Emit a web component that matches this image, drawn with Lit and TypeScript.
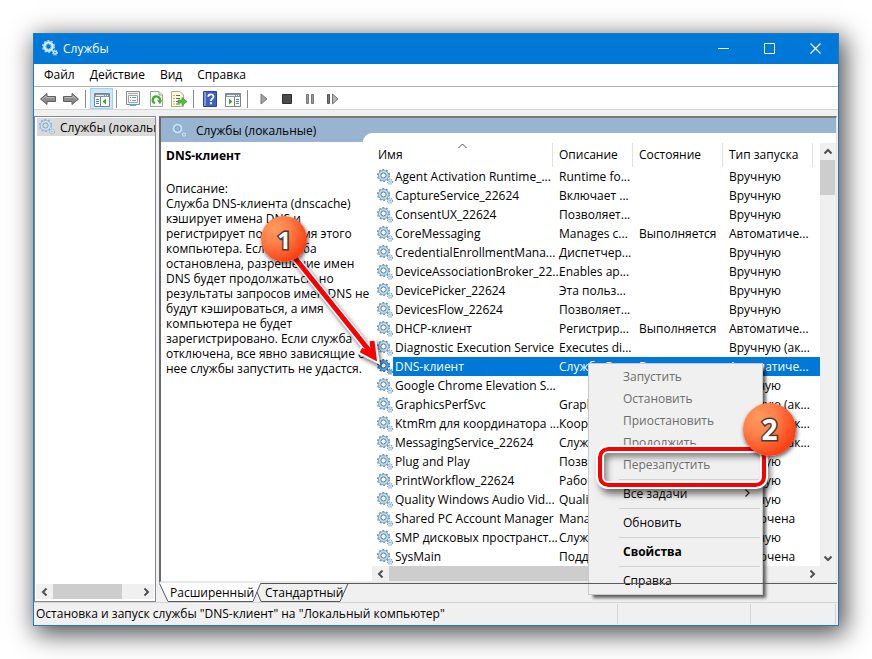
import { LitElement, html, svg, css, nothing } from "lit";
import { customElement, state } from "lit/decorators.js";
import { classMap } from "lit/directives/class-map.js";

interface Service {
  name: string;
  description: string;
  status: string;
  startup: string;
}

const row = (name: string, description: string, startup: string, status = ""): Service => ({
  name,
  description,
  status,
  startup,
});

const SERVICES: Service[] = [
  row("Agent Activation Runtime_...", "Runtime fo...", "Вручную"),
  row("CaptureService_22624", "Включает ...", "Вручную"),
  row("ConsentUX_22624", "Позволяет...", "Вручную"),
  row("CoreMessaging", "Manages c...", "Автоматиче...", "Выполняется"),
  row("CredentialEnrollmentMana...", "Диспетчер...", "Вручную"),
  row("DeviceAssociationBroker_22...", "Enables ap...", "Вручную"),
  row("DevicePicker_22624", "Эта польз...", "Вручную"),
  row("DevicesFlow_22624", "Позволяет...", "Вручную"),
  row("DHCP-клиент", "Регистрир...", "Автоматиче...", "Выполняется"),
  row("Diagnostic Execution Service", "Executes di...", "Вручную (ак..."),
  row("DNS-клиент", "Служба D...", "Автоматиче...", "Выполняется"),
  row("Google Chrome Elevation S...", "", "Вручную"),
  row("GraphicsPerfSvc", "Graphics p...", "Вручную (ак..."),
  row("KtmRm для координатора ...", "Координи...", "Вручную (ак..."),
  row("MessagingService_22624", "Служба, о...", "Вручную (ак..."),
  row("Plug and Play", "Позволяет...", "Вручную"),
  row("PrintWorkflow_22624", "Рабочий п...", "Вручную"),
  row("Quality Windows Audio Vid...", "Quality Wi...", "Вручную"),
  row("Shared PC Account Manager", "Manages p...", "Отключена"),
  row("SMP дисковых пространст...", "Служба уз...", "Вручную"),
  row("SysMain", "Поддержи...", "Отключена"),
];

const DESCRIPTION = [
  "Служба DNS-клиента (dnscache)",
  "кэширует имена DNS и",
  "регистрирует полное имя этого",
  "компьютера. Если служба",
  "остановлена, разрешение имен",
  "DNS будет продолжаться, но",
  "результаты запросов имен DNS не",
  "будут кэшироваться, а имя",
  "компьютера не будет",
  "зарегистрировано. Если служба",
  "отключена, все явно зависящие от",
  "нее службы запустить не удастся.",
];

const gears = (kind: "normal" | "pale" | "title" | "selected" = "normal") => {
  const c = {
    normal: ["#6f96b5", "#bcdcf0", "#4f7a9e", "#6c95b6"],
    pale: ["#8db2cf", "#c9e4f5", "#7ba3c3", "#8fb4d0"],
    title: ["#a8d4f2", "#d9effb", "#86bce4", "#b5daf3"],
    selected: ["#1f6fb4", "#5ea4dc", "#14589a", "#2474ba"],
  }[kind];
  return html`<svg class="gear" viewBox="0 0 16 16" width="16" height="16" aria-hidden="true">
    <circle cx="6.5" cy="6.5" r="5.7" fill="none" stroke=${c[0]} stroke-width="1.8" stroke-dasharray="1.9 1.68" />
    <circle cx="6.5" cy="6.5" r="4" fill="none" stroke=${c[1]} stroke-width="2.6" />
    <circle cx="6.5" cy="6.5" r="5.1" fill="none" stroke=${c[0]} stroke-width=".7" />
    <circle cx="6.5" cy="6.5" r="2.6" fill="none" stroke=${c[2]} stroke-width="1" />
    <circle cx="13" cy="12.6" r="2.4" fill="none" stroke=${c[3]} stroke-width="1.3" stroke-dasharray="1.1 .78" />
    <circle cx="13" cy="12.6" r="1.5" fill="none" stroke=${c[1]} stroke-width="1.1" />
    <circle cx="13" cy="12.6" r=".6" fill=${c[2]} />
  </svg>`;
};

const glyphs = {
  back: svg`<path d="M.5 8 7 2.500V5.500H15.500V10.500H7V13.500Z" fill="#8c8c8c" stroke="#5f5f5f"/><path d="M2.500 8 6.200 5V6.600H14.500" fill="none" stroke="#bdbdbd"/>`,
  forward: svg`<path d="M15.500 8 9 2.500V5.500H.5V10.500H9V13.500Z" fill="#8c8c8c" stroke="#5f5f5f"/><path d="M1.500 6.600H9.800V5L13.500 8" fill="none" stroke="#bdbdbd"/>`,
  tree: svg`<path d="M.5 2.500H15.500V15.500H.5Z" fill="#fff" stroke="#7d8489"/><path d="M1 3H15V6H1Z" fill="#8b949a"/><path d="M2 4.500H10M11 4.500H12M13 4.500H14" stroke="#e8eef2"/><path d="M6.500 6V15" stroke="#7d8489"/><path d="M2 8.500H5M2 10.500H5M2 12.500H5" stroke="#3e86c4"/><path d="M12 7.500V13.500L8.500 10.500Z" fill="#2fae2c"/>`,
  props: svg`<path d="M1.500.5H14.500V13.500H1.500Z" fill="#f4f4f4" stroke="#8a8a8a"/><path d="M3 2.500H13" stroke="#a9a9a9"/><path d="M3.500 4.500H12.500V11.500H3.500Z" fill="#fff" stroke="#9aa4ab"/><path d="M5 6.500H6M7 6.500H11M5 9.500H6M7 9.500H11" stroke="#6d93b3"/><path d="M5 13H11V15H5Z" fill="#58a7d8"/>`,
  refresh: svg`<path d="M2.500.5H11L14.500 4V15.500H2.500Z" fill="#fbfbf6" stroke="#a3a39c"/><path d="M11 .5V4H14.500" fill="#e4e4dc" stroke="#a3a39c"/><path d="M7 12.300A3.600 3.600 0 1 1 11.900 9.600" fill="none" stroke="#38ad2f" stroke-width="2.200"/><path d="M14 9 9 9.200 12 13.200Z" fill="#38ad2f"/>`,
  exportList: svg`<path d="M.5.5H9L12.500 4V15.500H.5Z" fill="#fdf8dc" stroke="#b3a97a"/><path d="M2.500 4.500H3.500M5 4.500H9M2.500 7.500H3.500M5 7.500H9M2.500 10.500H3.500M5 10.500H8M2.500 13H3.500M5 13H9" stroke="#6b6b6b"/><path d="M7 9H11V6.500L16 10.500 11 14.500V12H7Z" fill="#4cc23a" stroke="#2f9226" stroke-width=".6"/>`,
  help: svg`<path d="M1.500.5H14.500V15.500H1.500Z" fill="#3f63c4" stroke="#2b4593"/><path d="M2 1H4V15H2Z" fill="#7f9ae2"/><path d="M6.200 5.800C6.200 2.500 11.500 2.500 11.500 5.600 11.500 7.800 8.900 7.700 8.900 10" fill="none" stroke="#fff" stroke-width="1.700"/><path d="M8 11.300H9.900V13.200H8Z" fill="#fff"/>`,
  pane: svg`<path d="M.5 2.500H15.500V15.500H.5Z" fill="#fff" stroke="#7d8489"/><path d="M1 3H15V6H1Z" fill="#8b949a"/><path d="M2 4.500H10M11 4.500H12M13 4.500H14" stroke="#e8eef2"/><path d="M9.500 6V15" stroke="#7d8489"/><path d="M11 8.500H14M11 10.500H14M11 12.500H14" stroke="#3e86c4"/><path d="M4 7.500V13.500L7.500 10.500Z" fill="#2fae2c"/>`,
  play: svg`<path d="M5 3 11 8 5 13Z" fill="#a3a3a3" stroke="#777"/>`,
  stop: svg`<path d="M3.500 3.500H12.500V12.500H3.500Z" fill="#4a4a4a" stroke="#2e2e2e" stroke-linejoin="round"/>`,
  pause: svg`<path d="M4.500 3.500H6.500V12.500H4.500ZM9.500 3.500H11.500V12.500H9.500Z" fill="#9a9a9a" stroke="#777"/>`,
  restart: svg`<path d="M2.500 3.500H4.500V12.500H2.500Z" fill="#777" stroke="#555"/><path d="M7.500 3 13 8 7.500 13Z" fill="#b5b5b5" stroke="#777"/>`,
};

const TOOLS: { id: keyof typeof glyphs; label: string; on?: boolean }[][] = [
  [
    { id: "back", label: "Назад" },
    { id: "forward", label: "Вперед" },
  ],
  [{ id: "tree", label: "Дерево консоли", on: true }],
  [
    { id: "props", label: "Свойства" },
    { id: "refresh", label: "Обновить" },
    { id: "exportList", label: "Экспорт списка" },
  ],
  [
    { id: "help", label: "Справка" },
    { id: "pane", label: "Панель действий" },
  ],
  [
    { id: "play", label: "Запуск службы" },
    { id: "stop", label: "Остановка службы" },
    { id: "pause", label: "Приостановка службы" },
    { id: "restart", label: "Перезапуск службы" },
  ],
];

const chevron = (dir: "left" | "right" | "up" | "down") => {
  const d = {
    left: "M6.500 1.500 3 5 6.500 8.500",
    right: "M3.500 1.500 7 5 3.500 8.500",
    up: "M1.500 6.500 5 3 8.500 6.500",
    down: "M1.500 3.500 5 7 8.500 3.500",
  }[dir];
  return html`<svg viewBox="0 0 10 10" width="10" height="10" aria-hidden="true">
    <path d=${d} fill="none" stroke="#505050" stroke-width="2" />
  </svg>`;
};

const MENU: ({ label: string; off?: boolean; strong?: boolean; sub?: boolean } | null)[] = [
  { label: "Запустить", off: true },
  { label: "Остановить", off: true },
  { label: "Приостановить", off: true },
  { label: "Продолжить", off: true },
  { label: "Перезапустить", off: true },
  null,
  { label: "Все задачи", sub: true },
  null,
  { label: "Обновить" },
  null,
  { label: "Свойства", strong: true },
  null,
  { label: "Справка" },
];

@customElement("app-root")
export class AppRoot extends LitElement {
  @state() private selected = 10;

  static styles = css`
    :host {
      display: flex;
      box-sizing: border-box;
      min-height: 100vh;
      padding: 33px;
      background: #fff;
      color: #000;
      font: 12px/15px "Open Sans", "Noto Sans", sans-serif;
      overflow: hidden;
    }
    * {
      box-sizing: border-box;
    }
    button {
      margin: 0;
      padding: 0;
      border: 0;
      background: none;
      color: inherit;
      font: inherit;
      text-align: left;
      white-space: nowrap;
    }
    svg {
      display: block;
      flex: none;
    }
    .window {
      flex: 1;
      min-width: 0;
      display: flex;
      flex-direction: column;
      border: 1px solid #1a7bc9;
      background: #f0f0f0;
      box-shadow: 4px 6px 24px 2px rgba(0, 0, 0, 0.7);
    }
    .titlebar {
      display: flex;
      align-items: center;
      height: 30px;
      padding: 0 0 2px 8px;
      background: #0078d7;
      color: #fff;
    }
    .titlebar h1 {
      flex: 1;
      margin: 0 0 0 5px;
      font: inherit;
    }
    .caption {
      display: flex;
      align-items: center;
      justify-content: center;
      width: 46px;
      height: 28px;
    }
    .menubar {
      display: flex;
      gap: 15px;
      padding: 0 10px;
      height: 23px;
      line-height: 22px;
      background: #fff;
      border-bottom: 1px solid #b0b0b0;
    }
    .toolbar {
      display: flex;
      height: 23px;
      padding: 1px 0 0 2px;
      background: #fff;
      border-bottom: 1px solid #d4d4d4;
    }
    .tools {
      display: flex;
    }
    .tools + .tools::before {
      content: "";
      width: 1px;
      height: 18px;
      margin: 2px 4px 0 3px;
      background: #8c8c8c;
    }
    .tool {
      display: flex;
      align-items: center;
      justify-content: center;
      width: 23px;
      height: 21px;
    }
    .tool.on {
      background: #cce8ff;
      border: 1px solid #99d1ff;
    }
    .workspace {
      flex: 1;
      display: grid;
      grid-template-columns: 122px minmax(0, 1fr);
      gap: 3px;
      padding-top: 6px;
      border-bottom: 1px solid #d4d4d4;
    }
    .tree {
      display: flex;
      flex-direction: column;
      justify-content: space-between;
      border: 1px solid #828790;
      background: #fff;
      padding: 1px 1px 2px;
      overflow: hidden;
    }
    .node {
      display: flex;
      align-items: center;
      gap: 5px;
      width: 100%;
      height: 18px;
      margin-left: 1px;
      padding-left: 2px;
      background: #d9d9d9;
    }
    .hbar {
      display: flex;
      height: 15px;
      background: #f0f0f0;
    }
    .arrow {
      display: flex;
      align-items: center;
      justify-content: center;
      width: 17px;
      height: 15px;
    }
    .track {
      flex: 1;
    }
    .thumb {
      background: #cdcdcd;
      height: 100%;
    }
    .hbar .thumb {
      width: 82%;
    }
    .view {
      display: flex;
      flex-direction: column;
      padding-right: 1px;
    }
    .extended {
      flex: 1;
      display: grid;
      grid-template-columns: 202px minmax(0, 1fr);
      border: 2px solid #696969;
      border-top-color: #7a7a7a;
      border-right: 1px solid #e3e3e3;
      border-bottom: 2px solid #e9e9e9;
      background: #fff;
    }
    .banner {
      display: flex;
      align-items: center;
      gap: 9px;
      height: 24px;
      padding-left: 10px;
      background: #99b4d1;
    }
    .banner h2 {
      margin: 0;
      font: inherit;
    }
    .about {
      position: relative;
      z-index: 1;
      padding: 6px 0 0 5px;
      white-space: nowrap;
    }
    .about h3 {
      margin: 0 0 18px;
      font: inherit;
      font-weight: 700;
    }
    .about p {
      margin: 0;
    }
    .listside {
      display: flex;
      padding-top: 15px;
      background: #99b4d1;
    }
    .list {
      position: relative;
      flex: 1;
      min-width: 0;
      display: grid;
      grid-template-columns: minmax(0, 1fr) 16px;
      grid-template-rows: 1fr 15px;
      padding: 10px 0 0 9px;
      border-top-left-radius: 9px;
      background: #fff;
    }
    table {
      width: 100%;
      table-layout: fixed;
      border-collapse: separate;
      border-spacing: 0;
    }
    th,
    td {
      padding: 0 0 0 6px;
      font-weight: 400;
      text-align: left;
      white-space: nowrap;
    }
    th {
      position: relative;
      height: 24px;
      padding-bottom: 2px;
      border-right: 1px solid #e2e2e2;
    }
    th:last-child {
      border: 0;
    }
    th svg {
      position: absolute;
      top: 0;
      left: 48%;
    }
    .c-name {
      width: 181px;
    }
    .c-desc {
      width: 80px;
    }
    .c-state {
      width: 90px;
    }
    td {
      height: 19px;
      line-height: 19px;
    }
    .item {
      display: flex;
      align-items: center;
      height: 19px;
      margin-left: -1px;
    }
    .item span {
      flex: 1;
      min-width: 0;
      padding-left: 2px;
      height: 19px;
    }
    .selected .item span,
    .selected td:not(:first-child) {
      background: #0078d7;
      color: #fff;
    }
    .vbar {
      display: flex;
      flex-direction: column;
      background: #f0f0f0;
    }
    .vbar .arrow {
      width: 15px;
      height: 17px;
    }
    .vbar .thumb {
      width: 15px;
      height: 9%;
    }
    .corner {
      background: #f0f0f0;
    }
    .tabs {
      position: relative;
      display: flex;
      height: 19px;
      padding-left: 11px;
    }
    .tabs::after {
      content: "";
      flex: 1;
      border-top: 1px solid #5a5a5a;
    }
    .tabs svg {
      position: absolute;
      top: 0;
      left: 0;
    }
    .tab {
      position: relative;
      width: 95px;
      line-height: 18px;
    }
    .tab.last {
      width: 82px;
    }
    .status {
      display: grid;
      grid-template-columns: minmax(0, 1fr) 133px 85px;
      height: 22px;
      padding: 1px 2px 1px 0;
      line-height: 20px;
    }
    .status span {
      padding-left: 2px;
      border-right: 1px solid #d4d4d4;
      white-space: nowrap;
    }
    .popup {
      position: absolute;
      top: 230px;
      left: 225px;
      width: 175px;
      padding: 2px;
      border: 1px solid #c8c8c8;
      background: #f0f0f0;
      box-shadow: 4px 4px 3px -1px rgba(0, 0, 0, 0.6);
    }
    .popup button {
      display: flex;
      align-items: center;
      justify-content: space-between;
      width: 100%;
      height: 22px;
      padding: 0 9px 2px 32px;
    }
    .popup .off {
      color: #6d6d6d;
    }
    .popup .strong {
      font-weight: 700;
    }
    .popup hr {
      height: 1px;
      margin: 3px 0 3px 28px;
      border: 0;
      background: #d2d2d2;
    }
    .frame {
      position: absolute;
      top: 83px;
      left: 9px;
      width: 168px;
      height: 40px;
      border: 4px solid #fa0000;
      border-radius: 10px;
      outline: 2px solid #fff;
      box-shadow: inset 0 0 0 2px #fff, inset 4px 5px 6px 1px rgba(0, 0, 0, 0.45), 3px 6px 7px 1px rgba(0, 0, 0, 0.55);
      pointer-events: none;
    }
    .badge {
      position: absolute;
      display: flex;
      align-items: center;
      justify-content: center;
      border-radius: 50%;
      background: radial-gradient(circle at 30% 28%, #ff9a5e 0%, #ff8049 32%, #fb4416 72%, #e22e08 100%);
      box-shadow: 1px 2px 4px rgba(0, 0, 0, 0.65);
      color: #fff;
      font-weight: 700;
      -webkit-text-stroke: 3px #4a3a36;
      paint-order: stroke fill;
      pointer-events: none;
    }
    .one {
      z-index: 2;
      top: 74px;
      left: 100px;
      width: 46px;
      height: 46px;
      font-size: 24px;
    }
    .two {
      top: 39px;
      left: 154px;
      width: 53px;
      height: 53px;
      font-size: 28px;
    }
    .pointer {
      position: absolute;
      top: 104px;
      left: 124px;
      z-index: 1;
      filter: drop-shadow(2px 3px 2px rgba(0, 0, 0, 0.55));
      pointer-events: none;
    }
  `;

  private pick(i: number) {
    this.selected = i;
  }

  private hbar() {
    return html`<div class="hbar">
      <button class="arrow" aria-label="Влево">${chevron("left")}</button>
      <div class="track"><div class="thumb"></div></div>
      <button class="arrow" aria-label="Вправо">${chevron("right")}</button>
    </div>`;
  }

  private popup() {
    return html`<div class="popup" role="menu">
      ${MENU.map((m) =>
        m
          ? html`<button role="menuitem" class=${classMap({ off: !!m.off, strong: !!m.strong })} ?disabled=${m.off}>
              ${m.label}
              ${m.sub
                ? html`<svg viewBox="0 0 8 8" width="8" height="8" aria-hidden="true">
                    <path d="M2.500.5 6 4 2.500 7.500" fill="none" stroke="#222" stroke-width="1.200" />
                  </svg>`
                : nothing}
            </button>`
          : html`<hr />`
      )}
      <div class="frame"></div>
      <div class="badge two">2</div>
    </div>`;
  }

  render() {
    return html`<main class="window">
      <header class="titlebar">
        ${gears("title")}
        <h1>Службы</h1>
        <button class="caption" aria-label="Свернуть">
          <svg width="11" height="11"><path d="M0 5.500H11" stroke="#fff" /></svg>
        </button>
        <button class="caption" aria-label="Развернуть">
          <svg width="11" height="11"><path d="M.5.5H10.500V10.500H.5Z" fill="none" stroke="#fff" /></svg>
        </button>
        <button class="caption" aria-label="Закрыть">
          <svg width="11" height="11"><path d="M.5.5 10.500 10.500M10.500.5.5 10.500" stroke="#fff" stroke-width="1.200" /></svg>
        </button>
      </header>
      <nav class="menubar">
        ${["Файл", "Действие", "Вид", "Справка"].map((t) => html`<button>${t}</button>`)}
      </nav>
      <div class="toolbar" role="toolbar">
        ${TOOLS.map(
          (group) => html`<div class="tools">
            ${group.map(
              (t) => html`<button class=${classMap({ tool: true, on: !!t.on })} aria-label=${t.label}>
                <svg viewBox="0 0 16 16" width="16" height="16">${glyphs[t.id]}</svg>
              </button>`
            )}
          </div>`
        )}
      </div>
      <div class="workspace">
        <aside class="tree">
          <button class="node">${gears("pale")}<span>Службы (локальные)</span></button>
          ${this.hbar()}
        </aside>
        <section class="view">
          <div class="extended">
            <div>
              <div class="banner">${gears("pale")}<h2>Службы (локальные)</h2></div>
              <div class="about">
                <h3>DNS-клиент</h3>
                <p>Описание:</p>
                <p>${DESCRIPTION.map((line) => html`${line}<br />`)}</p>
                <svg class="pointer" width="96" height="120" viewBox="0 0 96 120" aria-hidden="true">
                  <g fill="none" stroke-linejoin="miter">
                    <path d="M10 12 86 107M87 93 90 112 74 104" stroke="#fff" stroke-width="8" />
                    <path d="M10 12 87 108M87 95 89 111 76 104" stroke="#fa0000" stroke-width="5" />
                  </g>
                </svg>
                <div class="badge one">1</div>
              </div>
            </div>
            <div class="listside">
              <div class="list">
                <table>
                  <thead>
                    <tr>
                      <th class="c-name">
                        Имя
                        <svg width="9" height="6"><path d="M.5 5 4.500 1 8.500 5" fill="none" stroke="#555" /></svg>
                      </th>
                      <th class="c-desc">Описание</th>
                      <th class="c-state">Состояние</th>
                      <th class="c-state">Тип запуска</th>
                      <th></th>
                    </tr>
                  </thead>
                  <tbody>
                    ${SERVICES.map(
                      (s, i) => html`<tr class=${classMap({ selected: i === this.selected })} @click=${() => this.pick(i)}>
                        <td>
                          <div class="item">${gears(i === this.selected ? "selected" : "normal")}<span>${s.name}</span></div>
                        </td>
                        <td>${s.description}</td>
                        <td>${s.status}</td>
                        <td>${s.startup}</td>
                        <td></td>
                      </tr>`
                    )}
                  </tbody>
                </table>
                <div class="vbar">
                  <button class="arrow" aria-label="Вверх">${chevron("up")}</button>
                  <div class="track"><div class="thumb"></div></div>
                  <button class="arrow" aria-label="Вниз">${chevron("down")}</button>
                </div>
                ${this.hbar()}
                <div class="corner"></div>
                ${this.popup()}
              </div>
            </div>
          </div>
          <div class="tabs" role="tablist">
            <svg width="192" height="19" aria-hidden="true">
              <path d="M0 0H102L94 18.500H9Z" fill="#fff" />
              <path d="M.5.5 9 18.500H94L101.500.5" fill="none" stroke="#555" />
              <path d="M98 9 102 18.500H181L189 .5H192M101.500.5H189" fill="none" stroke="#555" />
            </svg>
            <button class="tab" role="tab" aria-selected="true">Расширенный</button>
            <button class="tab last" role="tab" aria-selected="false">Стандартный</button>
          </div>
        </section>
      </div>
      <footer class="status">
        <span>Остановка и запуск службы "DNS-клиент" на "Локальный компьютер"</span>
        <span></span>
        <span></span>
      </footer>
    </main>`;
  }
}
